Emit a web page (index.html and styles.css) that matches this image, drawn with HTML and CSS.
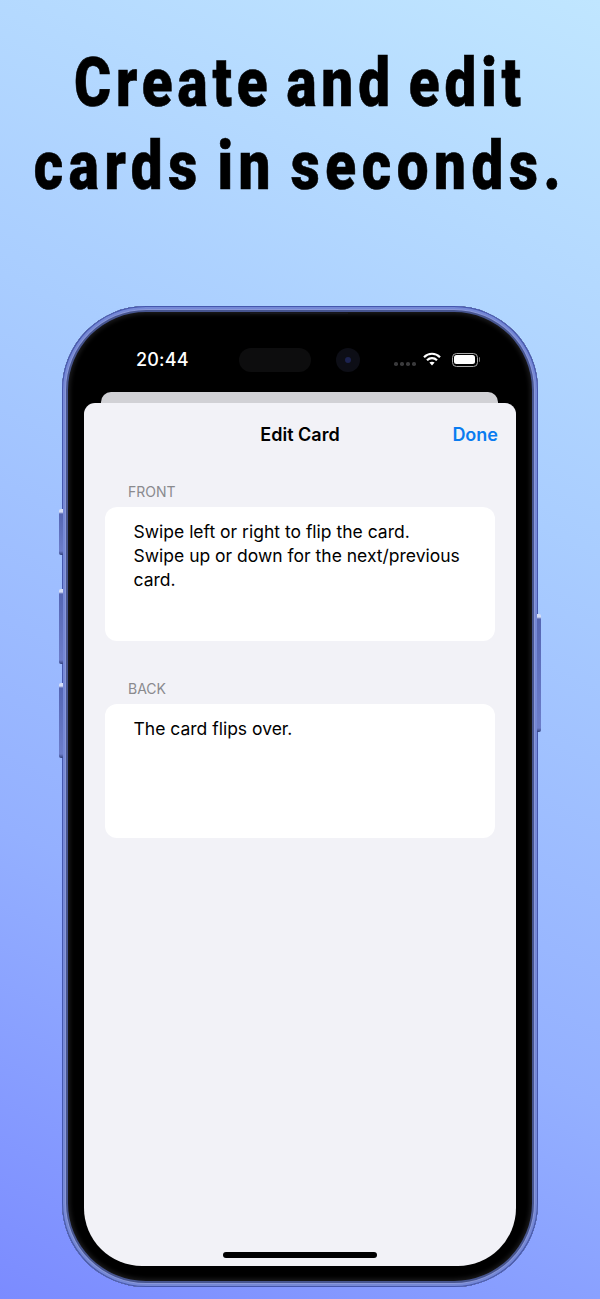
FILE: index.html
```html
<!DOCTYPE html>
<html lang="en">
<head>
<meta charset="utf-8">
<title>Edit Card</title>
<link rel="stylesheet" href="styles.css">
</head>
<body>
<h1 class="headline"><span class="line-a">Create and edit</span><br><span class="line-b">cards in seconds.</span></h1>
<div class="phone">
  <span class="btn btn-action"></span>
  <span class="btn btn-up"></span>
  <span class="btn btn-down"></span>
  <span class="btn btn-power"></span>
  <span class="speaker"></span>
  <div class="status">
    <span class="time">20:44</span>
    <div class="island"></div>
    <div class="camera"><span class="lens"></span></div>
    <div class="dots"><i></i><i></i><i></i><i></i></div>
    <svg class="wifi" viewBox="0 0 18 14" width="18" height="14" aria-hidden="true">
      <path d="M1 5.2C5.6 .6 12.4 .6 17 5.2" fill="none" stroke="#fff" stroke-width="2.2"/>
      <path d="M4 8.2c2.9-2.8 7.1-2.8 10 0" fill="none" stroke="#fff" stroke-width="2.2"/>
      <path d="M6.4 10.6c1.5-1.3 3.7-1.3 5.2 0L9 13.6z" fill="#fff"/>
    </svg>
    <div class="battery"><span class="cell"></span></div>
  </div>
  <div class="sheet-back"></div>
  <div class="sheet">
    <div class="nav">
      <span class="nav-title">Edit Card</span>
      <span class="nav-done">Done</span>
    </div>
    <div class="group">
      <div class="label">FRONT</div>
      <div class="field">Swipe left or right to flip the card.<br>Swipe up or down for the next/previous<br>card.</div>
    </div>
    <div class="group">
      <div class="label">BACK</div>
      <div class="field">The card flips over.</div>
    </div>
    <span class="home"></span>
  </div>
</div>
</body>
</html>
```
FILE: styles.css
```css
* { box-sizing: border-box; }
html, body { margin: 0; height: 100%; }
body {
  width: 600px;
  height: 1299px;
  overflow: hidden;
  background: linear-gradient(205deg, #c0e6ff 0%, #a9cdff 35%, #94b0ff 70%, #7b8bff 100%);
  font-family: Inter, "Liberation Sans", sans-serif;
  display: flex;
  flex-direction: column;
  align-items: center;
}
.headline {
  margin: 41px 0 129px;
  height: 136px;
  font-family: Roboto, "Liberation Sans", sans-serif;
  font-weight: 900;
  font-size: 56.5px;
  line-height: 68px;
  text-align: center;
  color: #000;
  white-space: nowrap;
  word-spacing: -5px;
  -webkit-text-stroke: .5px #000;
  transform: scaleY(1.22);
  transform-origin: top center;
}
.line-a { letter-spacing: 4.9px; }
.line-b { letter-spacing: 5.6px; }
.phone {
  position: relative;
  width: 476px;
  height: 981px;
  flex: none;
  padding: 0 22px 21px;
  border-radius: 84px;
  background: #000;
  display: flex;
  flex-direction: column;
  box-shadow:
    inset 0 0 0 1px #4557ad,
    inset 0 0 0 3px #7588d6,
    inset 0 0 0 4px #8a98d8,
    inset 0 0 0 6px #47558f,
    inset 0 0 4px 8px #1c1c1e;
}
.btn {
  position: absolute;
  width: 4px;
  background: linear-gradient(180deg, #d5def8 0, #d5def8 3px, #5566b4 5px, #6c7dca calc(100% - 4px), #34437f 100%);
  border-radius: 2px 0 0 2px;
}
.btn-action { left: -3px; top: 203px; height: 46px; }
.btn-up { left: -3px; top: 283px; height: 75px; }
.btn-down { left: -3px; top: 377px; height: 75px; }
.btn-power { right: -3px; top: 308px; height: 118px; border-radius: 0 2px 2px 0; }
.speaker {
  position: absolute;
  left: 188px;
  top: 6px;
  width: 98px;
  height: 2px;
  background: #16161c;
}
.status {
  position: relative;
  height: 86px;
  flex: none;
  display: flex;
  align-items: center;
  padding-top: 21px;
  color: #fff;
}
.time {
  margin-left: 52px;
  width: 103px;
  font-size: 18px;
  font-weight: 500;
  letter-spacing: .2px;
}
.island {
  width: 72px;
  height: 24px;
  border-radius: 12px;
  background: #0d0d0e;
}
.camera {
  width: 24px;
  height: 24px;
  margin-left: 25px;
  border-radius: 50%;
  background: #0d0e16;
  display: flex;
  align-items: center;
  justify-content: center;
}
.lens {
  width: 6px;
  height: 6px;
  border-radius: 50%;
  background: #1c2350;
}
.dots {
  display: flex;
  gap: 2.5px;
  margin: 9px 0 0 34px;
}
.dots i {
  width: 3.5px;
  height: 3.5px;
  border-radius: 50%;
  background: #3a3a3c;
}
.wifi { margin-left: 7.5px; flex: none; transform: translateY(-1px); }
.battery {
  position: relative;
  width: 26px;
  height: 14px;
  margin-left: 10.5px;
  padding: 1.5px;
  border: 1px solid #a8a8a8;
  border-radius: 4.5px;
}
.battery::after {
  content: "";
  position: absolute;
  right: -3.5px;
  top: 3.5px;
  width: 1.5px;
  height: 5px;
  background: #777;
  border-radius: 0 1px 1px 0;
}
.cell {
  display: block;
  height: 100%;
  background: #fff;
  border-radius: 2.5px;
}
.sheet-back {
  height: 11px;
  flex: none;
  margin: 0 18px 0 17px;
  background: #d1d1d5;
  border-radius: 10px 10px 0 0;
}
.sheet {
  position: relative;
  flex: 1;
  padding: 0 21px;
  background: #f2f2f7;
  border-radius: 11px 11px 58px 58px;
}
.nav {
  position: relative;
  height: 62px;
  display: flex;
  align-items: center;
  justify-content: center;
}
.nav-title {
  font-size: 18px;
  font-weight: 600;
  color: #000;
}
.nav-done {
  position: absolute;
  top: 21px;
  right: -3px;
  font-size: 18px;
  font-weight: 600;
  color: #0a7cf0;
}
.group { margin-bottom: 21px; }
.label {
  height: 42px;
  padding: 18px 0 0 23px;
  font-size: 14px;
  line-height: 17px;
  color: #8a8a8e;
}
.field {
  height: 134px;
  padding: 13px 0 0 28.5px;
  background: #fff;
  border-radius: 12px;
  font-size: 17.5px;
  line-height: 24px;
  color: #000;
}
.home {
  position: absolute;
  left: 139px;
  bottom: 8px;
  width: 154px;
  height: 6px;
  border-radius: 3px;
  background: #000;
}
```
